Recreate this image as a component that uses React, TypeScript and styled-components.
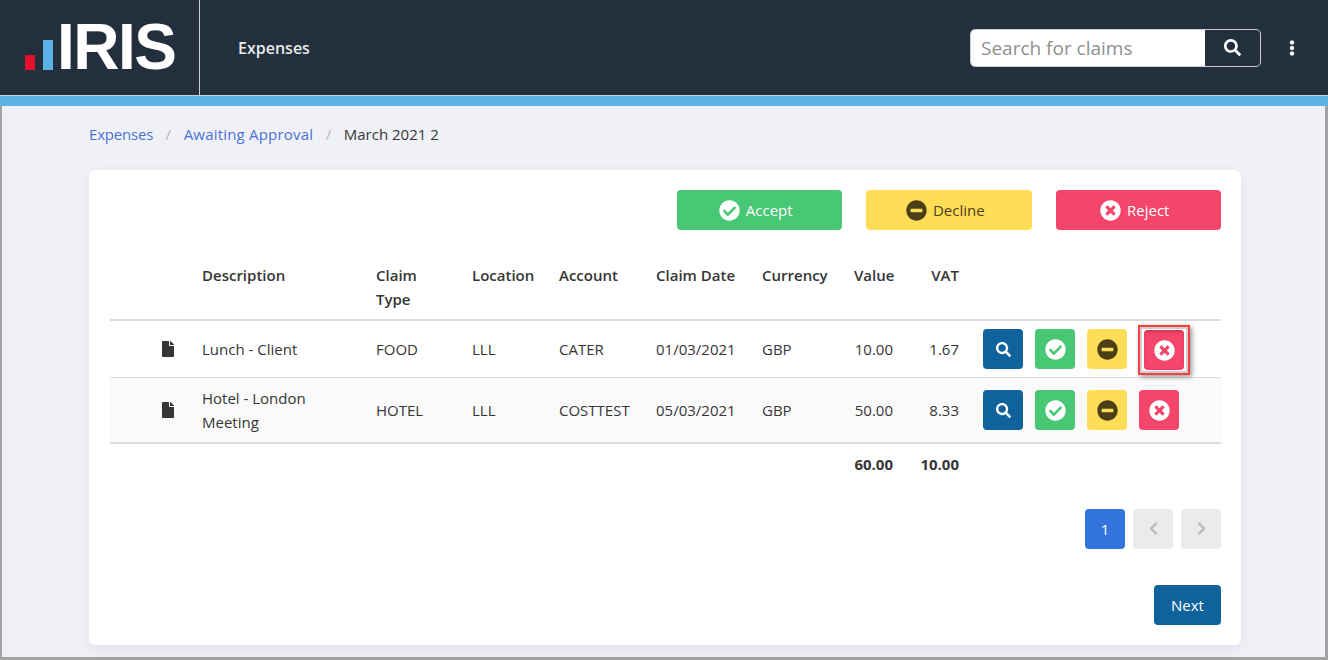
import React from "react";
import styled, { createGlobalStyle } from "styled-components";
import {
  FaCheckCircle,
  FaChevronLeft,
  FaChevronRight,
  FaEllipsisV,
  FaFile,
  FaMinusCircle,
  FaSearch,
  FaTimesCircle,
} from "react-icons/fa";

const GlobalStyle = createGlobalStyle`
  html, body {
    margin: 0;
    padding: 0;
    background: #f0f1f7;
  }
  body {
    font-family: "Open Sans", "Noto Sans", "Liberation Sans", sans-serif;
    font-size: 15px;
    color: #363636;
  }
  * {
    box-sizing: border-box;
  }
`;

const Page = styled.div`
  width: 1328px;
  height: 660px;
  display: flex;
  flex-direction: column;
  overflow: hidden;
`;

const Header = styled.header`
  height: 96px;
  flex: none;
  display: flex;
  align-items: center;
  background: #232f3c;
  border-bottom: 1px solid #c9d2da;
`;

const Brand = styled.div`
  width: 200px;
  height: 100%;
  flex: none;
  display: flex;
  align-items: flex-end;
  padding: 0 0 25px 25px;
  border-right: 1px solid #c8cdd2;
`;

const Bar = styled.span<{ $color: string; $height: number }>`
  width: 10px;
  height: ${(p) => p.$height}px;
  margin-right: 8px;
  background: ${(p) => p.$color};
`;

const LogoText = styled.span`
  font-family: "Liberation Sans", Arial, sans-serif;
  font-weight: 700;
  font-size: 64px;
  line-height: 46px;
  height: 46px;
  letter-spacing: -1.5px;
  color: #fff;
  margin-left: -4px;
`;

const AppName = styled.div`
  margin-left: 38px;
  font-size: 16px;
  font-weight: 600;
  color: #e8eaec;
`;

const SearchBox = styled.div`
  margin-left: auto;
  width: 291px;
  height: 38px;
  display: flex;
  border: 1px solid #c8cdd2;
  border-radius: 5px;
  overflow: hidden;
`;

const SearchField = styled.div`
  flex: 1;
  display: flex;
  align-items: center;
  padding-left: 10px;
  background: #fff;
  color: #8f8f8f;
  font-size: 19px;
`;

const SearchButton = styled.div`
  width: 55px;
  display: flex;
  align-items: center;
  justify-content: center;
  color: #fff;
  font-size: 17px;
`;

const MenuDots = styled.div`
  width: 67px;
  display: flex;
  justify-content: center;
  padding-right: 5px;
  color: #f0f0f0;
  font-size: 16px;
`;

const Stripe = styled.div`
  height: 10px;
  flex: none;
  background: #5db3e6;
`;

const Content = styled.main`
  flex: 1;
  padding: 16px 84px 12px 87px;
  border-left: 2px solid #a3a3a3;
  border-right: 3px solid #a3a3a3;
  border-bottom: 3px solid #a3a3a3;
`;

const Breadcrumb = styled.nav`
  height: 24px;
  display: flex;
  align-items: center;
  margin-bottom: 24px;
  font-size: 15px;
`;

const Crumb = styled.a<{ $spacing: number }>`
  color: #4a72d8;
  letter-spacing: ${(p) => p.$spacing}px;
`;

const Slash = styled.span`
  margin: 0 12.5px;
  color: #b5b5b5;
`;

const Card = styled.section`
  width: 1152px;
  height: 475px;
  display: flex;
  flex-direction: column;
  padding: 20px 20px 20px 21px;
  background: #fff;
  border-radius: 6px;
  box-shadow: 0 4px 14px rgba(40, 50, 90, 0.08);
`;

const TopActions = styled.div`
  display: flex;
  justify-content: flex-end;
  gap: 24px;
  margin-bottom: 25px;
`;

const ActionButton = styled.button<{ $bg: string; $fg: string }>`
  width: 165.5px;
  height: 40px;
  display: flex;
  align-items: center;
  justify-content: center;
  gap: 6px;
  padding: 0 7px 0 0;
  border: none;
  border-radius: 4px;
  background: ${(p) => p.$bg};
  color: ${(p) => p.$fg};
  font-family: inherit;
  font-size: 15px;
  svg {
    font-size: 21px;
  }
`;

const Table = styled.table`
  width: 1111px;
  border-collapse: collapse;
  table-layout: fixed;
  font-size: 15px;
  line-height: 24px;
`;

const Th = styled.th<{ $right?: boolean }>`
  padding: 8px 12px 8px;
  text-align: ${(p) => (p.$right ? "right" : "left")};
  font-weight: 600;
  vertical-align: top;
  border-bottom: 2px solid #dbdbdb;
`;

const Row = styled.tr<{ $shade?: boolean }>`
  height: ${(p) => (p.$shade ? "65px" : "57px")};
  background: ${(p) => (p.$shade ? "#fafafa" : "#fff")};
`;

const Td = styled.td<{ $right?: boolean; $last?: boolean }>`
  padding: 8px 12px ${(p) => (p.$last ? "7px" : "8px")};
  text-align: ${(p) => (p.$right ? "right" : "left")};
  vertical-align: middle;
  border-bottom: ${(p) => (p.$last ? "2px solid #dbdbdb" : "1px solid #dbdbdb")};
`;

const IconCell = styled(Td)`
  padding-left: 50px;
  font-size: 16px;
  line-height: 0;
  color: #363636;
`;

const Total = styled.td<{ $right?: boolean }>`
  padding: 8px 12px;
  text-align: ${(p) => (p.$right ? "right" : "left")};
  font-weight: 700;
`;

const RowActions = styled.div`
  display: flex;
  align-items: center;
  gap: 12px;
`;

const SquareButton = styled.button<{ $bg: string; $fg: string }>`
  width: 40px;
  height: 40px;
  flex: none;
  display: flex;
  align-items: center;
  justify-content: center;
  padding: 0;
  border: none;
  border-radius: 4px;
  background: ${(p) => p.$bg};
  color: ${(p) => p.$fg};
  font-family: inherit;
  font-size: 15px;
`;

// the marked button sits in a red callout drawn over the row
const Highlighted = styled(SquareButton)`
  position: relative;
  transform: translate(5px, 1px);
  box-shadow: inset 0 2px 3px rgba(120, 0, 30, 0.25);
  &::after {
    content: "";
    position: absolute;
    inset: -5px -6px -5px -6px;
    border: 2px solid #ff3f3f;
    box-shadow: inset 0 0 0 2px #cfcfcf, 2px 2px 5px rgba(0, 0, 0, 0.4);
  }
`;

const Pager = styled.div`
  display: flex;
  justify-content: flex-end;
  gap: 8px;
  margin-top: 25px;
`;

const Footer = styled.div`
  display: flex;
  justify-content: flex-end;
  margin-top: 36px;
`;

const NextButton = styled.button`
  width: 67px;
  height: 40px;
  border: none;
  border-radius: 4px;
  background: #10629c;
  color: #fff;
  font-family: inherit;
  font-size: 15px;
`;

const rows = [
  { desc: "Lunch - Client", type: "FOOD", loc: "LLL", acc: "CATER", date: "01/03/2021", value: "10.00", vat: "1.67" },
  { desc: "Hotel - London Meeting", type: "HOTEL", loc: "LLL", acc: "COSTTEST", date: "05/03/2021", value: "50.00", vat: "8.33" },
];

const widths = [80, 174, 96, 87, 97, 106, 92, 63, 66, 250];

export default function App() {
  return (
    <Page>
      <GlobalStyle />
      <Header>
        <Brand>
          <Bar $color="#e2112d" $height={15} />
          <Bar $color="#5db3e6" $height={30} />
          <LogoText>IRIS</LogoText>
        </Brand>
        <AppName>Expenses</AppName>
        <SearchBox>
          <SearchField>Search for claims</SearchField>
          <SearchButton>
            <FaSearch />
          </SearchButton>
        </SearchBox>
        <MenuDots>
          <FaEllipsisV />
        </MenuDots>
      </Header>
      <Stripe />
      <Content>
        <Breadcrumb>
          <Crumb $spacing={-0.2}>Expenses</Crumb>
          <Slash>/</Slash>
          <Crumb $spacing={0.2}>Awaiting Approval</Crumb>
          <Slash>/</Slash>
          <span>March 2021 2</span>
        </Breadcrumb>
        <Card>
          <TopActions>
            <ActionButton $bg="#48c774" $fg="#fff">
              <FaCheckCircle /> Accept
            </ActionButton>
            <ActionButton $bg="#ffdd57" $fg="#4b3f17">
              <FaMinusCircle /> Decline
            </ActionButton>
            <ActionButton $bg="#f4466a" $fg="#fff">
              <FaTimesCircle /> Reject
            </ActionButton>
          </TopActions>
          <Table>
            <colgroup>
              {widths.map((w, i) => (
                <col key={i} width={w} />
              ))}
            </colgroup>
            <thead>
              <tr>
                <Th />
                <Th>Description</Th>
                <Th>Claim Type</Th>
                <Th>Location</Th>
                <Th>Account</Th>
                <Th>Claim Date</Th>
                <Th>Currency</Th>
                <Th $right>Value</Th>
                <Th $right>VAT</Th>
                <Th />
              </tr>
            </thead>
            <tbody>
              {rows.map((r, i) => {
                const last = i === rows.length - 1;
                return (
                  <Row key={r.desc} $shade={i === 1}>
                    <IconCell $last={last}>
                      <FaFile />
                    </IconCell>
                    <Td $last={last}>{r.desc}</Td>
                    <Td $last={last}>{r.type}</Td>
                    <Td $last={last}>{r.loc}</Td>
                    <Td $last={last}>{r.acc}</Td>
                    <Td $last={last}>{r.date}</Td>
                    <Td $last={last}>GBP</Td>
                    <Td $last={last} $right>{r.value}</Td>
                    <Td $last={last} $right>{r.vat}</Td>
                    <Td $last={last}>
                      <RowActions>
                        <SquareButton $bg="#10629c" $fg="#fff">
                          <FaSearch />
                        </SquareButton>
                        <SquareButton $bg="#48c774" $fg="#fff">
                          <FaCheckCircle size={21} />
                        </SquareButton>
                        <SquareButton $bg="#ffdd57" $fg="#4b3f17">
                          <FaMinusCircle size={21} />
                        </SquareButton>
                        {i === 0 ? (
                          <Highlighted $bg="#f4466a" $fg="#fff">
                            <FaTimesCircle size={21} />
                          </Highlighted>
                        ) : (
                          <SquareButton $bg="#f4466a" $fg="#fff">
                            <FaTimesCircle size={21} />
                          </SquareButton>
                        )}
                      </RowActions>
                    </Td>
                  </Row>
                );
              })}
            </tbody>
            <tfoot>
              <tr>
                <Total colSpan={7} />
                <Total $right>60.00</Total>
                <Total $right>10.00</Total>
                <Total />
              </tr>
            </tfoot>
          </Table>
          <Pager>
            <SquareButton $bg="#3273dc" $fg="#fff">1</SquareButton>
            <SquareButton $bg="#ebebeb" $fg="#bdbdbd">
              <FaChevronLeft />
            </SquareButton>
            <SquareButton $bg="#ebebeb" $fg="#bdbdbd">
              <FaChevronRight />
            </SquareButton>
          </Pager>
          <Footer>
            <NextButton>Next</NextButton>
          </Footer>
        </Card>
      </Content>
    </Page>
  );
}
